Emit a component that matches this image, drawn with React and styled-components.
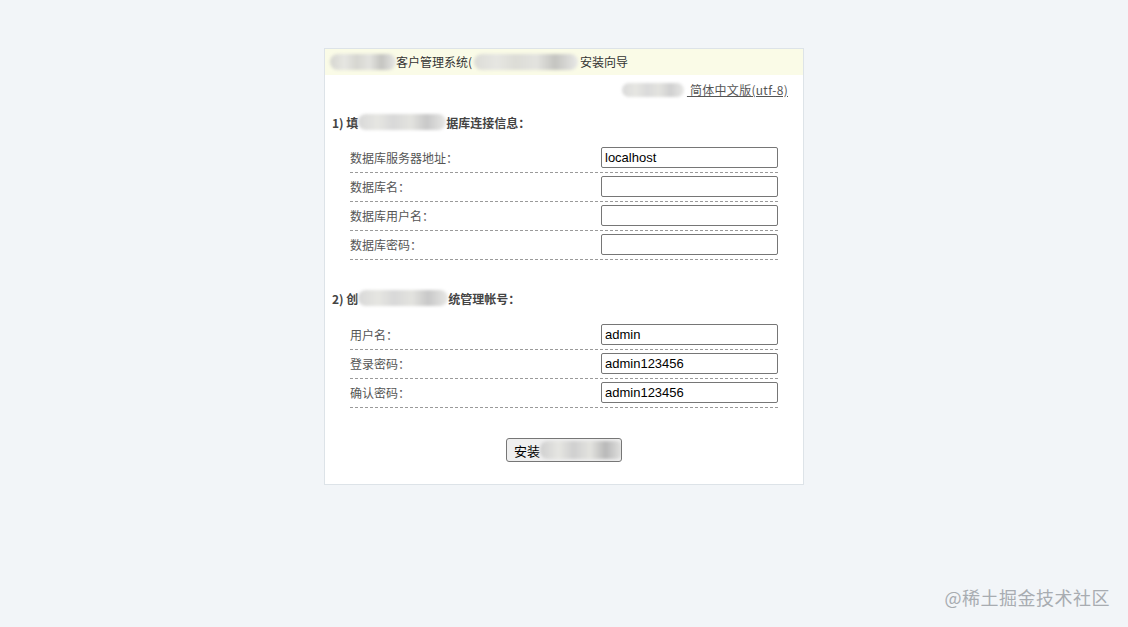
import React from "react";
import styled, { createGlobalStyle } from "styled-components";

const GlobalStyle = createGlobalStyle`
  html, body {
    margin: 0;
    padding: 0;
    background: #f2f5f8;
  }
  body {
    font-family: "Noto Sans CJK SC", "Liberation Sans", sans-serif;
    font-size: 12px;
    color: #555;
  }
`;

const Page = styled.div`
  position: relative;
  min-height: 627px;
  padding-top: 48px;
  box-sizing: border-box;
`;

const Card = styled.div`
  width: 480px;
  margin: 0 auto;
  background: #fff;
  border: 1px solid #dde3e8;
  box-sizing: border-box;
  padding-bottom: 22px;
`;

const Header = styled.div`
  height: 26px;
  background: #fafbe7;
  display: flex;
  align-items: center;
  padding-left: 5px;
  color: #333;
  font-size: 12px;
  line-height: 26px;
`;

const Redact = styled.span`
  display: inline-block;
  flex-shrink: 0;
  width: ${(p) => p.w}px;
  height: ${(p) => p.h || 16}px;
  margin: 0 ${(p) => p.gap || 0}px;
  vertical-align: middle;
  border-radius: 8px;
  background: linear-gradient(
    90deg,
    ${(p) => p.tone || "#d6d6d0"} 0%,
    #e6e6e2 22%,
    ${(p) => p.tone || "#d6d6d0"} 40%,
    #e3e3df 60%,
    ${(p) => p.dark || "#c4c4c0"} 78%,
    #e8e8e6 100%
  );
  filter: blur(1.5px);
`;

const LangLine = styled.div`
  display: flex;
  justify-content: flex-end;
  align-items: center;
  padding: 6px 15px 0 0;
  height: 17px;
`;

const LangLink = styled.a`
  color: #555;
  text-decoration: underline;
  font-size: 12px;
  letter-spacing: 0.3px;
  white-space: pre;
`;

const SectionTitle = styled.div`
  display: flex;
  align-items: center;
  padding-left: 7px;
  margin-top: ${(p) => p.top}px;
  height: 20px;
  font-weight: bold;
  font-size: 12px;
  color: #444;
`;

const Fields = styled.div`
  margin: ${(p) => p.top}px 25px 0 25px;
`;

const Row = styled.div`
  display: flex;
  justify-content: space-between;
  align-items: center;
  padding: 3px 0 4px 0;
  border-bottom: 1px dashed #9a9a9a;
`;

const Label = styled.span`
  color: #555;
  font-size: 12px;
`;

const Input = styled.input`
  width: 177px;
  height: 21px;
  box-sizing: border-box;
  border: 1px solid #767676;
  border-radius: 2px;
  padding: 0 3px;
  font-family: "Liberation Sans", Arial, sans-serif;
  font-size: 13px;
  color: #000;
  outline: none;
`;

const ButtonRow = styled.div`
  display: flex;
  justify-content: center;
  margin-top: 30px;
`;

const Button = styled.button`
  display: flex;
  align-items: center;
  width: 116px;
  height: 24px;
  padding: 0 0 0 7px;
  background: #efefef;
  border: 1px solid #767676;
  border-radius: 3px;
  font-family: "Noto Sans CJK SC", sans-serif;
  font-size: 13px;
  color: #000;
  white-space: nowrap;
  overflow: hidden;
`;

const Watermark = styled.div`
  position: absolute;
  right: 18px;
  bottom: 17px;
  font-size: 18px;
  color: #a8acb1;
  letter-spacing: 0.5px;
`;

const dbFields = [
  { label: "数据库服务器地址：", value: "localhost" },
  { label: "数据库名：", value: "" },
  { label: "数据库用户名：", value: "" },
  { label: "数据库密码：", value: "" },
];

const adminFields = [
  { label: "用户名：", value: "admin" },
  { label: "登录密码：", value: "admin123456" },
  { label: "确认密码：", value: "admin123456" },
];

export default function App() {
  return (
    <Page>
      <GlobalStyle />
      <Card>
        <Header>
          <Redact w={66} />
          <span>客户管理系统(</span>
          <Redact w={104} gap={2} tone="#dcdcd6" />
          <span>安装向导</span>
        </Header>
        <LangLine>
          <Redact w={62} h={14} gap={3} tone="#dadada" dark="#d0d0d0" />
          <LangLink href="#"> 简体中文版(utf-8)</LangLink>
        </LangLine>
        <SectionTitle top={14}>
          1) 填<Redact w={88} tone="#d8d8d8" dark="#c8c8c8" />据库连接信息：
        </SectionTitle>
        <Fields top={12}>
          {dbFields.map((f) => (
            <Row key={f.label}>
              <Label>{f.label}</Label>
              <Input defaultValue={f.value} />
            </Row>
          ))}
        </Fields>
        <SectionTitle top={28}>
          2) 创<Redact w={90} tone="#d8d8d8" dark="#c8c8c8" />统管理帐号：
        </SectionTitle>
        <Fields top={13}>
          {adminFields.map((f) => (
            <Row key={f.label}>
              <Label>{f.label}</Label>
              <Input defaultValue={f.value} />
            </Row>
          ))}
        </Fields>
        <ButtonRow>
          <Button type="button">
            安装
            <Redact w={84} h={18} tone="#cfcfcf" dark="#b8b8b8" />
          </Button>
        </ButtonRow>
      </Card>
      <Watermark>@稀土掘金技术社区</Watermark>
    </Page>
  );
}
